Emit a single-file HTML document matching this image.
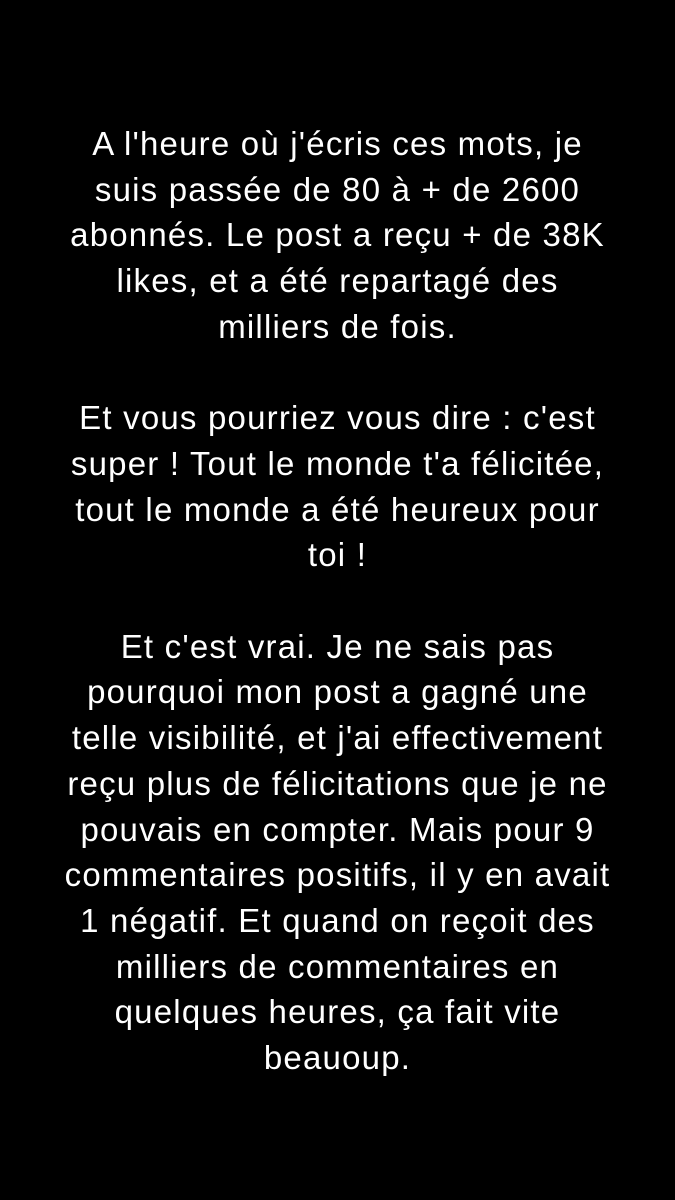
<!DOCTYPE html>
<html><head><meta charset="utf-8"><style>
html,body{margin:0;padding:0;background:#000;width:675px;height:1200px;overflow:hidden}
.t{position:absolute;left:0;top:121px;width:675px;text-align:center;color:#fff;font-family:"Liberation Sans","DejaVu Sans",sans-serif;font-size:33px;letter-spacing:1.2px;line-height:45.7px;white-space:nowrap}
</style></head><body>
<div class="t">A l'heure où j'écris ces mots, je<br>suis passée de 80 à + de 2600<br>abonnés. Le post a reçu + de 38K<br>likes, et a été repartagé des<br>milliers de fois.<br>&nbsp;<br>Et vous pourriez vous dire : c'est<br>super ! Tout le monde t'a félicitée,<br>tout le monde a été heureux pour<br>toi !<br>&nbsp;<br>Et c'est vrai. Je ne sais pas<br>pourquoi mon post a gagné une<br>telle visibilité, et j'ai effectivement<br>reçu plus de félicitations que je ne<br>pouvais en compter. Mais pour 9<br>commentaires positifs, il y en avait<br>1 négatif. Et quand on reçoit des<br>milliers de commentaires en<br>quelques heures, ça fait vite<br>beauoup.</div>
</body></html>
